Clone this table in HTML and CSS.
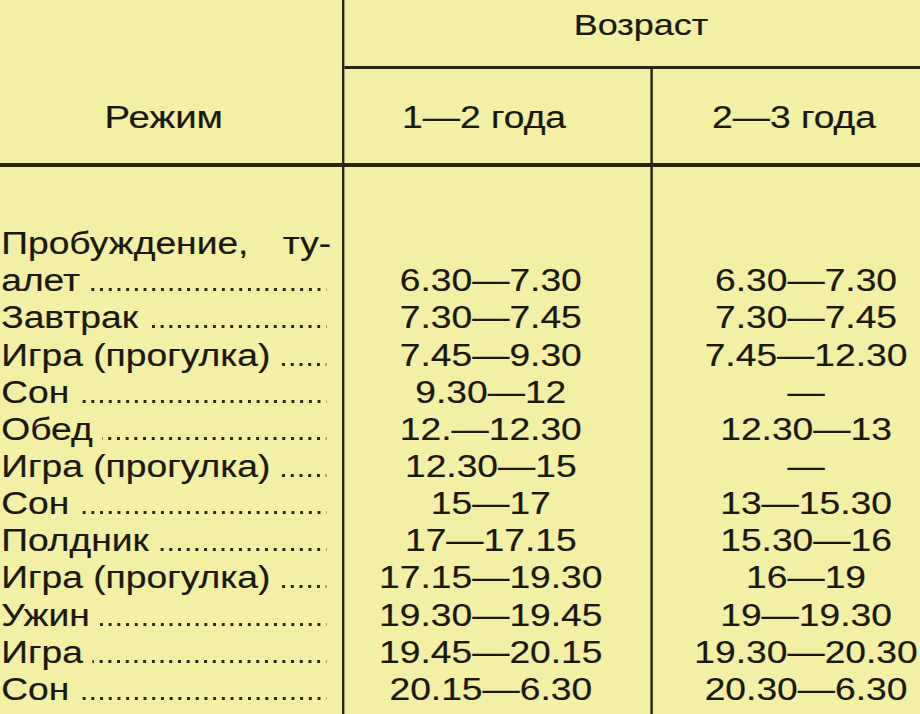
FILE: index.html
```html
<!DOCTYPE html>
<html lang="ru">
<head>
<meta charset="utf-8">
<title>Режим дня</title>
<link rel="stylesheet" href="styles.css">
</head>
<body>
<div class="sheet">
  <div class="head">
    <div class="h-mode">Режим</div>
    <div class="h-age">
      <div class="h-age-title">Возраст</div>
      <div class="h-age-cols">
        <div class="h-col h-col1">1—2 года</div>
        <div class="h-col h-col2">2—3 года</div>
      </div>
    </div>
  </div>
  <div class="rows">
    <div class="c1 first">
      <div class="split"><span>Пробуждение,</span><span>ту-</span></div>
      <div class="lead"><span class="label">алет</span><span class="dots"></span></div>
    </div>
    <div class="c2 first-val">6.30—7.30</div>
    <div class="c3 first-val">6.30—7.30</div>

    <div class="c1"><div class="lead"><span class="label">Завтрак</span><span class="dots"></span></div></div>
    <div class="c2">7.30—7.45</div>
    <div class="c3">7.30—7.45</div>

    <div class="c1"><div class="lead"><span class="label">Игра (прогулка)</span><span class="dots"></span></div></div>
    <div class="c2">7.45—9.30</div>
    <div class="c3">7.45—12.30</div>

    <div class="c1"><div class="lead"><span class="label">Сон</span><span class="dots"></span></div></div>
    <div class="c2">9.30—12</div>
    <div class="c3">—</div>

    <div class="c1"><div class="lead"><span class="label">Обед</span><span class="dots"></span></div></div>
    <div class="c2">12.—12.30</div>
    <div class="c3">12.30—13</div>

    <div class="c1"><div class="lead"><span class="label">Игра (прогулка)</span><span class="dots"></span></div></div>
    <div class="c2">12.30—15</div>
    <div class="c3">—</div>

    <div class="c1"><div class="lead"><span class="label">Сон</span><span class="dots"></span></div></div>
    <div class="c2">15—17</div>
    <div class="c3">13—15.30</div>

    <div class="c1"><div class="lead"><span class="label">Полдник</span><span class="dots"></span></div></div>
    <div class="c2">17—17.15</div>
    <div class="c3">15.30—16</div>

    <div class="c1"><div class="lead"><span class="label">Игра (прогулка)</span><span class="dots"></span></div></div>
    <div class="c2">17.15—19.30</div>
    <div class="c3">16—19</div>

    <div class="c1"><div class="lead"><span class="label">Ужин</span><span class="dots"></span></div></div>
    <div class="c2">19.30—19.45</div>
    <div class="c3">19—19.30</div>

    <div class="c1"><div class="lead"><span class="label">Игра</span><span class="dots"></span></div></div>
    <div class="c2">19.45—20.15</div>
    <div class="c3">19.30—20.30</div>

    <div class="c1"><div class="lead"><span class="label">Сон</span><span class="dots"></span></div></div>
    <div class="c2">20.15—6.30</div>
    <div class="c3">20.30—6.30</div>
  </div>
</div>
</body>
</html>
```
FILE: styles.css
```css
html, body {
  margin: 0;
  padding: 0;
  overflow: hidden;
  background: #f3f0a6;
}

.sheet {
  width: 766.67px;
  height: 714px;
  transform: scaleX(1.2);
  transform-origin: 0 0;
  font-family: "Liberation Sans", Arial, sans-serif;
  color: #1b180e;
  -webkit-text-stroke: 0.2px #1b180e;
  display: flex;
  flex-direction: column;
}

/* ---------- header ---------- */
.head {
  display: grid;
  grid-template-columns: 286.67px 1fr;
  border-bottom: 4px solid #2a2414;
  height: 167px;
  box-sizing: border-box;
}

.h-mode {
  border-right: 2.5px solid #2a2414;
  box-sizing: border-box;
  padding: 99px 11.7px 0 0;
  text-align: center;
  font-size: 32px;
  line-height: 37.2px;
}

.h-age {
  display: flex;
  flex-direction: column;
}

.h-age-title {
  height: 69px;
  box-sizing: border-box;
  border-bottom: 3px solid #2a2414;
  padding: 7px 0 0 15px;
  text-align: center;
  font-size: 30px;
  line-height: 36px;
}

.h-age-cols {
  flex: 1;
  display: grid;
  grid-template-columns: 257.5px 1fr;
}

.h-col {
  padding-top: 30px;
  text-align: center;
  font-size: 31px;
  line-height: 37.2px;
  box-sizing: border-box;
}

.h-col1 {
  border-right: 2.5px solid #2a2414;
  padding-right: 22px;
}

.h-col2 {
  padding-left: 12.6px;
}

/* ---------- rows ---------- */
.rows {
  flex: 1;
  display: grid;
  grid-template-columns: 286.67px 257.5px 1fr;
  grid-template-rows: auto repeat(10, 37.17px) minmax(37.17px, 1fr);
  font-size: 31px;
  line-height: 37.17px;
}

.c1, .c2, .c3 {
  box-sizing: border-box;
  white-space: nowrap;
}

.c1 {
  border-right: 2.5px solid #2a2414;
  padding: 0 13px 0 1px;
}

.c2 {
  border-right: 2.5px solid #2a2414;
  text-align: center;
  padding-right: 10.8px;
}

.c3 {
  text-align: center;
  padding-left: 32.6px;
}

.c1.first {
  padding-top: 58px;
}

.first-val {
  padding-top: 95.17px;
}

.split {
  display: flex;
  justify-content: space-between;
  width: 275px;
}

.lead {
  display: flex;
  align-items: baseline;
}

.dots {
  flex: 1;
  height: 3px;
  margin-left: 8px;
  background-image: linear-gradient(to right, #2a2414 2.4px, transparent 2.4px);
  background-size: 7.25px 3px;
  background-repeat: repeat-x;
  background-position: right bottom;
}
```
